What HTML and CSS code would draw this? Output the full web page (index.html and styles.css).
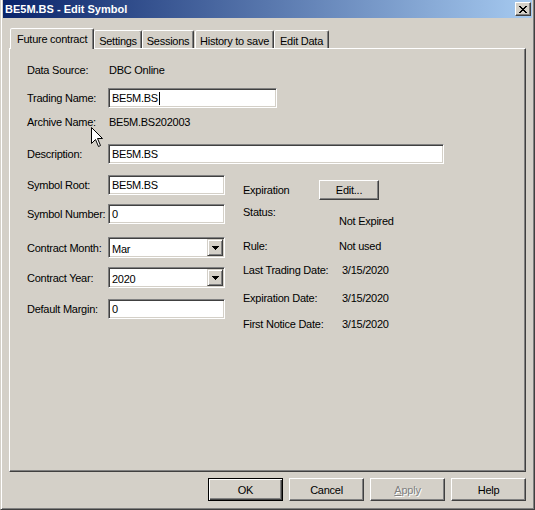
FILE: index.html
```html
<!DOCTYPE html>
<html>
<head>
<meta charset="utf-8">
<title>BE5M.BS - Edit Symbol</title>
<link rel="stylesheet" href="styles.css">
</head>
<body>
<div class="window">
  <div class="titlebar">
    <span class="title">BE5M.BS - Edit Symbol</span>
    <div class="close">
      <svg width="8" height="7" viewBox="0 0 8 7" shape-rendering="crispEdges">
        <rect x="0" y="0" width="2" height="1"/><rect x="6" y="0" width="2" height="1"/>
        <rect x="1" y="1" width="2" height="1"/><rect x="5" y="1" width="2" height="1"/>
        <rect x="2" y="2" width="4" height="1"/>
        <rect x="3" y="3" width="2" height="1"/>
        <rect x="2" y="4" width="4" height="1"/>
        <rect x="1" y="5" width="2" height="1"/><rect x="5" y="5" width="2" height="1"/>
        <rect x="0" y="6" width="2" height="1"/><rect x="6" y="6" width="2" height="1"/>
      </svg>
    </div>
  </div>

  <div class="client">
    <div class="tabs">
      <div class="tab selected">Future contract</div>
      <div class="tab t-settings">Settings</div>
      <div class="tab t-sessions">Sessions</div>
      <div class="tab t-history">History to save</div>
      <div class="tab t-edit">Edit Data</div>
    </div>

    <div class="panel">
      <div class="row r-source"><span class="label">Data Source:</span><span class="value">DBC Online</span></div>
      <div class="row r-trading"><span class="label">Trading Name:</span><div class="edit w-trading">BE5M.BS<span class="caret"></span></div></div>
      <div class="row r-archive"><span class="label">Archive Name:</span><span class="value">BE5M.BS202003</span></div>
      <div class="row r-desc"><span class="label">Description:</span><div class="edit w-desc">BE5M.BS</div></div>

      <div class="cols">
        <div class="left">
          <div class="row r-root"><span class="label">Symbol Root:</span><div class="edit w-small">BE5M.BS</div></div>
          <div class="row r-number"><span class="label">Symbol Number:</span><div class="edit w-small">0</div></div>
          <div class="row r-month"><span class="label">Contract Month:</span>
            <div class="combo w-small"><span class="combo-text">Mar</span><span class="drop"><svg width="7" height="4" viewBox="0 0 7 4" shape-rendering="crispEdges"><rect x="0" y="0" width="7" height="1"/><rect x="1" y="1" width="5" height="1"/><rect x="2" y="2" width="3" height="1"/><rect x="3" y="3" width="1" height="1"/></svg></span></div>
          </div>
          <div class="row r-year"><span class="label">Contract Year:</span>
            <div class="combo w-small"><span class="combo-text">2020</span><span class="drop"><svg width="7" height="4" viewBox="0 0 7 4" shape-rendering="crispEdges"><rect x="0" y="0" width="7" height="1"/><rect x="1" y="1" width="5" height="1"/><rect x="2" y="2" width="3" height="1"/><rect x="3" y="3" width="1" height="1"/></svg></span></div>
          </div>
          <div class="row r-margin"><span class="label">Default Margin:</span><div class="edit w-small">0</div></div>
        </div>

        <div class="right">
          <div class="rrow x-exp"><span class="rlabel l-exp">Expiration</span><div class="btn btn-edit">Edit...</div></div>
          <div class="rrow x-status"><span class="rlabel l-short">Status:</span><span class="rvalue v-status">Not Expired</span></div>
          <div class="rrow x-rule"><span class="rlabel l-short">Rule:</span><span class="rvalue">Not used</span></div>
          <div class="rrow x-last"><span class="rlabel l-long">Last Trading Date:</span><span class="rvalue">3/15/2020</span></div>
          <div class="rrow x-expdate"><span class="rlabel l-long">Expiration Date:</span><span class="rvalue">3/15/2020</span></div>
          <div class="rrow x-notice"><span class="rlabel l-long">First Notice Date:</span><span class="rvalue">3/15/2020</span></div>
        </div>
      </div>
    </div>

    <div class="buttons">
      <div class="btn btn-main default">OK</div>
      <div class="btn btn-main">Cancel</div>
      <div class="btn btn-main disabled"><span class="u">A</span>pply</div>
      <div class="btn btn-main">Help</div>
    </div>
  </div>

  <svg class="cursor" width="13" height="21" viewBox="0 0 13 21">
    <path d="M0.5,0.5 L0.5,16.5 L4.5,12.5 L7.5,19.5 L9.5,18.5 L6.5,11.5 L11.5,11.5 Z" fill="#fff" stroke="#000" stroke-width="1" stroke-linejoin="miter"/>
  </svg>
</div>
</body>
</html>
```

FILE: styles.css
```css
html, body {
  margin: 0;
  padding: 0;
  background: #D4D0C8;
}
body {
  font-family: "Liberation Sans", Arial, sans-serif;
  font-size: 11px;
  letter-spacing: -0.25px;
  color: #000;
}
.window {
  position: relative;
  width: 535px;
  height: 510px;
  box-sizing: border-box;
  background: #D4D0C8;
  border-left: 1px solid #D4D0C8;
  border-right: 1px solid #404040;
  border-bottom: 1px solid #404040;
  box-shadow: inset 1px 0 #fff, inset -1px -1px #808080;
  padding: 0 2px 2px 2px;
  display: flex;
  flex-direction: column;
}
.titlebar {
  height: 18px;
  background: linear-gradient(to right, #0A246A, #A6CAF0);
  display: flex;
  align-items: center;
  justify-content: space-between;
  padding: 0 1px 0 2px;
}
.title {
  color: #fff;
  font-weight: bold;
  font-size: 11px;
  letter-spacing: 0;
}
.close {
  width: 16px;
  height: 14px;
  box-sizing: border-box;
  background: #D4D0C8;
  border: 1px solid;
  border-color: #fff #404040 #404040 #fff;
  box-shadow: inset -1px -1px #808080;
  display: flex;
  align-items: center;
  justify-content: center;
  padding-right: 1px;
}
.client {
  padding: 10px 6px 0 6px;
  flex: 1;
  display: flex;
  flex-direction: column;
}
.tabs {
  height: 20px;
  display: flex;
  align-items: flex-end;
  padding-left: 1px;
}
.tab {
  height: 18px;
  box-sizing: border-box;
  border: 1px solid;
  border-bottom: none;
  border-color: #fff #404040 transparent #fff;
  border-radius: 2px 2px 0 0;
  box-shadow: inset -1px 0 #808080;
  display: flex;
  align-items: center;
  justify-content: center;
  background: #D4D0C8;
  padding-top: 2px;
}
.tab.selected {
  height: 21px;
  margin-bottom: -1px;
  position: relative;
  z-index: 1;
  width: 84px;
  justify-content: flex-start;
  padding: 0 0 0 6px;
}
.t-settings { width: 48px; }
.t-sessions { width: 52px; margin-left: 0; }
.t-history { width: 79px; margin-left: 1px; }
.t-edit { width: 55px; }
.panel {
  height: 424px;
  box-sizing: border-box;
  border: 1px solid;
  border-color: #fff #404040 #404040 #fff;
  box-shadow: inset -1px -1px #808080;
  padding-left: 17px;
  display: flex;
  flex-direction: column;
}
.row {
  display: flex;
  align-items: center;
}
.label {
  width: 81px;
  flex: none;
  line-height: 14px;
  white-space: nowrap;
}
.value {
  padding-left: 1px;
  line-height: 14px;
}
.r-source { margin-top: 14px; }
.r-trading { margin-top: 11px; }
.r-archive { margin-top: 7px; }
.r-desc { margin-top: 15px; }
.edit {
  height: 20px;
  box-sizing: border-box;
  background: #fff;
  border: 1px solid;
  border-color: #808080 #fff #fff #808080;
  box-shadow: inset 1px 1px #404040, inset -1px -1px #D4D0C8;
  padding-left: 3px;
  display: flex;
  align-items: center;
}
.caret {
  display: inline-block;
  width: 1px;
  height: 13px;
  background: #000;
  margin-left: 1px;
}
.w-trading { width: 169px; }
.w-desc { width: 336px; }
.w-small { width: 117px; }
.cols {
  display: flex;
  gap: 18px;
}
.left {
  display: flex;
  flex-direction: column;
  width: 198px;
}
.r-root { margin-top: 11px; }
.r-number { margin-top: 9px; }
.r-month { margin-top: 13px; }
.r-year { margin-top: 9px; }
.r-margin { margin-top: 11px; }
.combo {
  height: 21px;
  box-sizing: border-box;
  background: #fff;
  border: 1px solid;
  border-color: #808080 #fff #fff #808080;
  box-shadow: inset 1px 1px #404040, inset -1px -1px #D4D0C8;
  padding: 2px 2px 2px 3px;
  display: flex;
  align-items: center;
  justify-content: space-between;
}
.combo-text { line-height: 14px; padding-top: 2px; }
.drop {
  width: 16px;
  height: 17px;
  box-sizing: border-box;
  background: #D4D0C8;
  border: 1px solid;
  border-color: #D4D0C8 #404040 #404040 #D4D0C8;
  box-shadow: inset 1px 1px #fff, inset -1px -1px #808080;
  display: flex;
  align-items: center;
  justify-content: center;
  margin-right: -1px;
}
.right {
  display: flex;
  flex-direction: column;
}
.rrow {
  display: flex;
  align-items: flex-start;
  line-height: 14px;
}
.rlabel { flex: none; white-space: nowrap; }
.l-exp { width: 76px; }
.l-short { width: 96px; }
.l-long { width: 99px; }
.x-exp { margin-top: 16px; align-items: center; }
.x-status { margin-top: 5px; }
.v-status { margin-top: 9px; }
.x-rule { margin-top: 11px; }
.x-last { margin-top: 10px; }
.x-expdate { margin-top: 14px; }
.x-notice { margin-top: 12px; }
.btn {
  box-sizing: border-box;
  background: #D4D0C8;
  border: 1px solid;
  border-color: #fff #404040 #404040 #fff;
  box-shadow: inset -1px -1px #808080;
  display: flex;
  align-items: center;
  justify-content: center;
}
.btn-edit {
  width: 60px;
  height: 20px;
}
.buttons {
  display: flex;
  justify-content: flex-end;
  gap: 6px;
  margin-top: 6px;
}
.btn-main {
  width: 75px;
  height: 23px;
}
.btn.default {
  border: 1px solid #000;
  box-shadow: inset 1px 1px #fff, inset -1px -1px #404040, inset -2px -2px #808080;
}
.btn.disabled {
  color: #808080;
  text-shadow: 1px 1px #fff;
}
.u { text-decoration: underline; }
.cursor {
  position: absolute;
  left: 90px;
  top: 127px;
}
```
